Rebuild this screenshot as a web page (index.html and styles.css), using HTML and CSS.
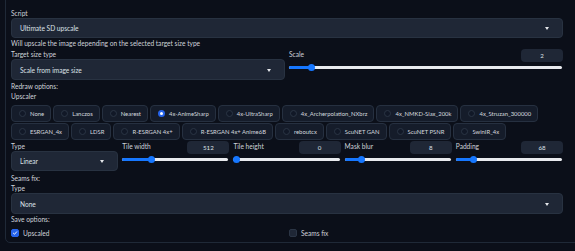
FILE: index.html
```html
<!DOCTYPE html>
<html>
<head>
<meta charset="utf-8">
<link rel="stylesheet" href="styles.css">
</head>
<body>
<div class="panel">
  <div class="label l-script">Script</div>
  <div class="dropdown dd-wide"><span>Ultimate SD upscale</span><i class="arrow"></i></div>
  <div class="info">Will upscale the image depending on the selected target size type</div>
  <div class="row2">
    <div class="col">
      <div class="label l-top">Target size type</div>
      <div class="dropdown dd-target"><span>Scale from image size</span><i class="arrow"></i></div>
    </div>
    <div class="col">
      <div class="slider-head"><span class="label">Scale</span><span class="num">2</span></div>
      <div class="slider"><div class="track"><div class="fill" style="width:22px"></div><div class="thumb" style="left:22px"></div></div></div>
    </div>
  </div>
  <div class="label l-redraw">Redraw options:</div>
  <div class="label l-upscaler">Upscaler</div>
  <div class="radios">
    <div class="radio"><i class="dot"></i>None</div>
    <div class="radio"><i class="dot"></i>Lanczos</div>
    <div class="radio"><i class="dot"></i>Nearest</div>
    <div class="radio on"><i class="dot"></i>4x-AnimeSharp</div>
    <div class="radio"><i class="dot"></i>4x-UltraSharp</div>
    <div class="radio"><i class="dot"></i>4x_Archerpolation_NXbrz</div>
    <div class="radio"><i class="dot"></i>4x_NMKD-Siax_200k</div>
    <div class="radio"><i class="dot"></i>4x_Struzan_300000</div>
  </div>
  <div class="radios r2">
    <div class="radio"><i class="dot"></i>ESRGAN_4x</div>
    <div class="radio"><i class="dot"></i>LDSR</div>
    <div class="radio"><i class="dot"></i>R-ESRGAN 4x+</div>
    <div class="radio"><i class="dot"></i>R-ESRGAN 4x+ Anime6B</div>
    <div class="radio"><i class="dot"></i>reboutcx</div>
    <div class="radio"><i class="dot"></i>ScuNET GAN</div>
    <div class="radio"><i class="dot"></i>ScuNET PSNR</div>
    <div class="radio"><i class="dot"></i>SwinIR_4x</div>
  </div>
  <div class="row5">
    <div class="col">
      <div class="label l-type">Type</div>
      <div class="dropdown dd-type"><span>Linear</span><i class="arrow"></i></div>
    </div>
    <div class="col">
      <div class="slider-head"><span class="label">Tile width</span><span class="num">512</span></div>
      <div class="slider"><div class="track"><div class="fill" style="width:29px"></div><div class="thumb" style="left:29px"></div></div></div>
    </div>
    <div class="col">
      <div class="slider-head"><span class="label">Tile height</span><span class="num">0</span></div>
      <div class="slider"><div class="track"><div class="fill" style="width:0"></div><div class="thumb" style="left:3px"></div></div></div>
    </div>
    <div class="col">
      <div class="slider-head"><span class="label">Mask blur</span><span class="num">8</span></div>
      <div class="slider"><div class="track"><div class="fill" style="width:17px"></div><div class="thumb" style="left:17px"></div></div></div>
    </div>
    <div class="col">
      <div class="slider-head"><span class="label">Padding</span><span class="num">68</span></div>
      <div class="slider"><div class="track"><div class="fill" style="width:18px"></div><div class="thumb" style="left:18px"></div></div></div>
    </div>
  </div>
  <div class="label l-seams">Seams fix:</div>
  <div class="label l-type2">Type</div>
  <div class="dropdown dd-seams"><span>None</span><i class="arrow"></i></div>
  <div class="label l-save">Save options:</div>
  <div class="row2 checks">
    <label class="check on"><i class="box"><svg viewBox="0 0 10 10" width="8" height="8"><path d="M2.3 5.3 L4.2 7.1 L7.8 3" fill="none" stroke="#fff" stroke-width="1.5" stroke-linecap="round" stroke-linejoin="round"/></svg></i>Upscaled</label>
    <label class="check"><i class="box"></i>Seams fix</label>
  </div>
</div>
</body>
</html>
```
FILE: styles.css
```css
html, body {
  margin: 0;
  padding: 0;
  background: #0b0f19;
  overflow: hidden;
}
body {
  width: 575px;
  height: 251px;
  font-family: "Lato", "Noto Sans", sans-serif;
  font-size: 6.6px;
  color: #cfd3da;
}
.panel {
  margin: -20px -20px 0 5px;
  padding: 27px 31px 5px 5px;
  border: 1px solid #1f2937;
  border-radius: 5px;
  box-sizing: border-box;
  height: 263px;
}
.label {
  display: block;
  font-size: 6.6px;
  line-height: 10px;
  height: 10px;
  color: #cfd3da;
  white-space: nowrap;
}
.dropdown {
  position: relative;
  display: flex;
  align-items: center;
  background: #1f2736;
  border: 1px solid #283241;
  border-radius: 4px;
  box-sizing: border-box;
  padding-left: 8px;
  color: #dde1e7;
  font-size: 6.6px;
}
.dropdown .arrow {
  position: absolute;
  right: 13px;
  top: 50%;
  margin-top: -1px;
  width: 0;
  height: 0;
  border-left: 2.5px solid transparent;
  border-right: 2.5px solid transparent;
  border-top: 3px solid #e5e7eb;
}
.dd-wide { height: 20px; }
.info {
  height: 11px;
  line-height: 11px;
  font-size: 6.6px;
  color: #cfd3da;
}
.row2 {
  display: grid;
  grid-template-columns: 1fr 1fr;
  column-gap: 4px;
}
.dd-target { height: 21px; }
.slider-head {
  display: flex;
  justify-content: space-between;
  align-items: flex-start;
  height: 13px;
}
.num {
  display: flex;
  align-items: center;
  justify-content: center;
  width: 42px;
  height: 13px;
  background: #1f2736;
  border-radius: 4px;
  font-size: 6.2px;
  color: #dde1e7;
}
.slider {
  height: 10px;
  display: flex;
  align-items: center;
}
.track {
  position: relative;
  flex: 1;
  height: 3px;
  background: #e8eaee;
  border-radius: 2px;
  margin-right: 1px;
}
.fill {
  position: absolute;
  left: 0;
  top: 0;
  bottom: 0;
  background: #1677ff;
  border-radius: 2px;
}
.thumb {
  position: absolute;
  top: 50%;
  width: 7px;
  height: 7px;
  margin: -3.5px 0 0 -3.5px;
  background: #1677ff;
  border-radius: 50%;
}
.l-redraw { margin-top: 1px; }
.l-upscaler { margin-bottom: 4px; }
.radios {
  display: flex;
  gap: 2px;
  height: 17px;
}
.r2 { margin-top: 1px; }
.radio {
  display: flex;
  align-items: center;
  gap: 4px;
  height: 17px;
  box-sizing: border-box;
  padding: 0 6px 0 7px;
  background: #151c2a;
  border: 1px solid #263040;
  border-radius: 4px;
  font-size: 5.9px;
  color: #d3d7de;
  white-space: nowrap;
}
.dot {
  width: 7px;
  height: 7px;
  box-sizing: border-box;
  border-radius: 50%;
  background: #111827;
  border: 1px solid #2b3545;
}
.radio.on .dot {
  background: #fff;
  border: 2px solid #2563eb;
}
.row5 {
  display: grid;
  grid-template-columns: repeat(5, 1fr);
  column-gap: 4px;
  margin-top: 1px;
}
.l-type { line-height: 11px; }
.dd-type { height: 20px; }
.l-seams { margin-top: 2px; }
.dd-seams { height: 21px; }
.checks { margin-top: 5px; }
.check {
  display: flex;
  align-items: center;
  gap: 4px;
  height: 8px;
  font-size: 6.6px;
  color: #cfd3da;
}
.box {
  display: flex;
  align-items: center;
  justify-content: center;
  width: 8px;
  height: 8px;
  box-sizing: border-box;
  border-radius: 2px;
  background: #1f2736;
  border: 1px solid #2b3545;
}
.check.on .box {
  background: #2563eb;
  border-color: #2563eb;
}
```
